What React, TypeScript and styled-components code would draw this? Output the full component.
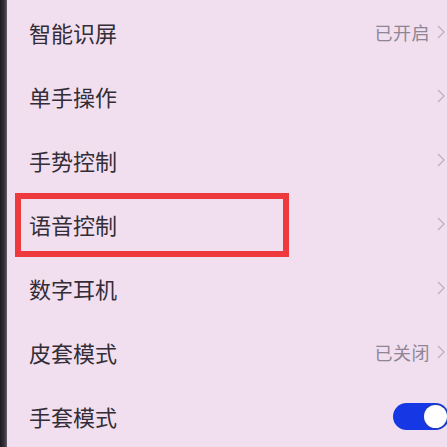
import React from "react";
import styled, { createGlobalStyle } from "styled-components";

const Global = createGlobalStyle`
  html, body { margin: 0; padding: 0; }
  body { background: #f1dff0; overflow: hidden; }
`;

const Screen = styled.div`
  width: 447px;
  height: 447px;
  display: flex;
  overflow: hidden;
  background: #f1dff0;
  font-family: "Noto Sans CJK SC", "Noto Sans", sans-serif;
`;

const Bezel = styled.div`
  width: 7px;
  flex: none;
  background: linear-gradient(to right, #1c1a1e, #3a3640 70%, #6a6270);
`;

const List = styled.div`
  flex: 1;
  display: flex;
  flex-direction: column;
  padding-top: 0px;
`;

const Row = styled.div`
  position: relative;
  height: 64px;
  flex: none;
  display: flex;
  align-items: center;
  padding-left: 22px;
  padding-right: 2px;
  box-sizing: border-box;
`;

const Label = styled.span`
  flex: 1;
  font-size: 22px;
  color: #332d37;
  letter-spacing: 0px;
`;

const Value = styled.span`
  font-size: 18px;
  letter-spacing: 0.5px;
  color: #8e8694;
  margin-right: 7px;
`;

const Chevron = styled.svg`
  width: 8px;
  height: 14px;
  flex: none;
`;

const Highlight = styled.div`
  position: absolute;
  left: 8px;
  top: 1px;
  width: 274px;
  height: 64px;
  border: 6px solid #ee3a3d;
  box-sizing: border-box;
  pointer-events: none;
`;

const Toggle = styled.div<{ $on: boolean }>`
  width: 56px;
  height: 27px;
  border-radius: 14px;
  background: ${(p) => (p.$on ? "#1538e4" : "#c9c0cc")};
  margin-right: -4px;
  display: flex;
  align-items: center;
  justify-content: ${(p) => (p.$on ? "flex-end" : "flex-start")};
  padding: 0 2px;
  box-sizing: border-box;
`;

const Knob = styled.div`
  width: 23px;
  height: 23px;
  border-radius: 50%;
  background: #ffffff;
  box-shadow: 0 0 0 1px #2a3fa8;
`;

const Arrow = () => (
  <Chevron viewBox="0 0 8 14">
    <path d="M1 1 L7 7 L1 13" fill="none" stroke="#bfaebf" strokeWidth="1.3" />
  </Chevron>
);

type Item = {
  label: string;
  value?: string;
  chevron?: boolean;
  toggle?: boolean;
  highlight?: boolean;
};

const items: Item[] = [
  { label: "智能识屏", value: "已开启", chevron: true },
  { label: "单手操作", chevron: true },
  { label: "手势控制", chevron: true },
  { label: "语音控制", chevron: true, highlight: true },
  { label: "数字耳机", chevron: true },
  { label: "皮套模式", value: "已关闭", chevron: true },
  { label: "手套模式", toggle: true },
];

export default function App() {
  return (
    <>
      <Global />
      <Screen>
        <Bezel />
        <List>
          {items.map((it) => (
            <Row key={it.label}>
              {it.highlight && <Highlight />}
              <Label>{it.label}</Label>
              {it.value && <Value>{it.value}</Value>}
              {it.chevron && <Arrow />}
              {it.toggle && (
                <Toggle $on>
                  <Knob />
                </Toggle>
              )}
            </Row>
          ))}
        </List>
      </Screen>
    </>
  );
}
